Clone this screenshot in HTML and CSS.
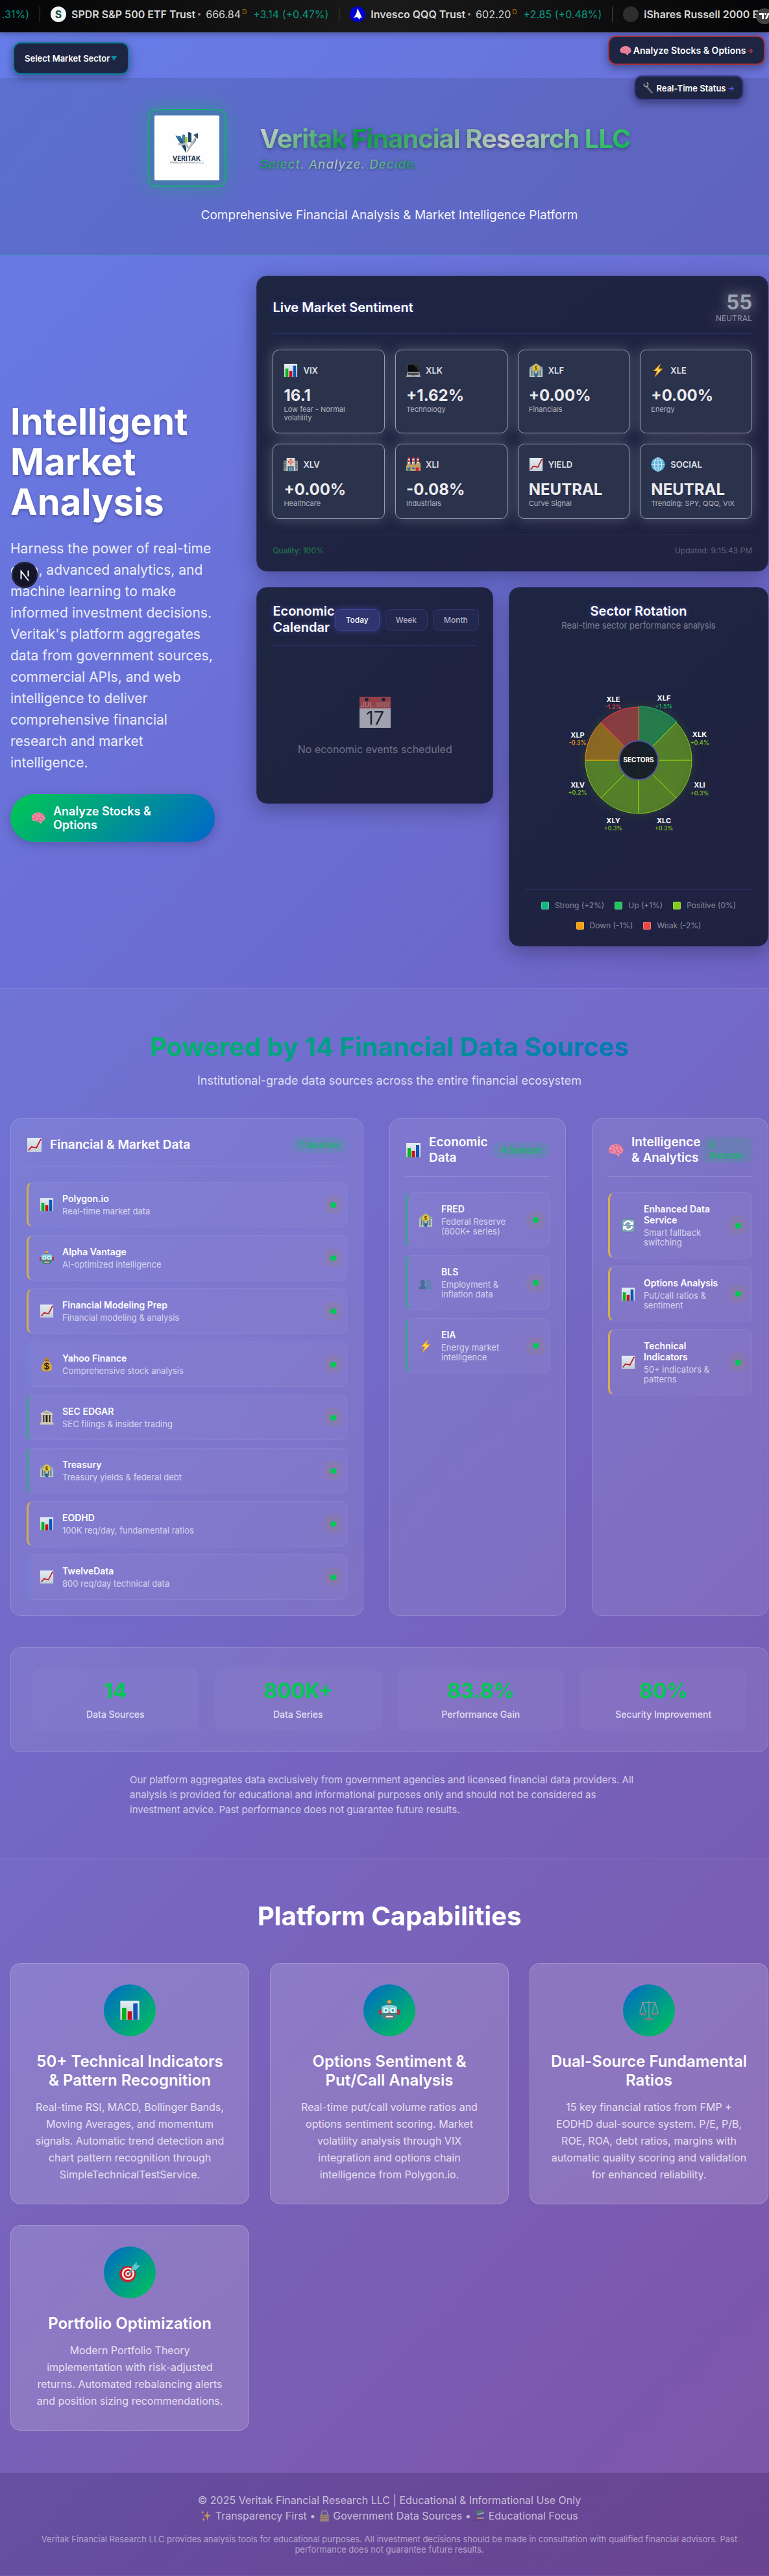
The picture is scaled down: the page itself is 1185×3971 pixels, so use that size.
FILE: index.html
```html
<!DOCTYPE html>
<html lang="en">
<head>
<meta charset="utf-8">
<meta name="viewport" content="width=device-width, initial-scale=1">
<title>Veritak Financial Research LLC</title>
<link rel="stylesheet" href="styles.css">
</head>
<body>
<svg class="sprite" aria-hidden="true">
  <defs>
    <linearGradient id="paper" x1="0" y1="0" x2="0" y2="1"><stop offset="0" stop-color="#e3edf5"/><stop offset="1" stop-color="#c3ccd6"/></linearGradient>
    <linearGradient id="navy" x1="0" y1="0" x2="1" y2="1"><stop offset="0" stop-color="#3f86b8"/><stop offset="1" stop-color="#0f2540"/></linearGradient>
  </defs>
  <symbol id="bars" viewBox="0 0 24 24"><path fill="url(#paper)" d="M1 1h22v22H1z"/><path fill="#07b31c" d="M3 9h5v14H3z"/><path fill="#c4121c" d="M9.500 13h5v10h-5z"/><path fill="#0b56b8" d="M16 4h5v19h-5z"/></symbol>
  <symbol id="trend" viewBox="0 0 24 24"><path fill="url(#paper)" d="M1 1h22v22H1z"/><path fill="none" stroke="#c4121c" stroke-width="1.800" d="M3 20.500l4.500-5.500 7.500 1.500L22 3"/></symbol>
  <symbol id="laptop" viewBox="0 0 24 24"><path fill="#4c4d50" d="M2 1h20v14H2z"/><path fill="#08090b" d="M3 2h18v12H3z"/><path fill="#25272b" d="M12 2h9v12z"/><path fill="#a9abae" d="M2 15h20l2 8H0z"/><path fill="#4b4d50" d="M3.500 16h17l1 3.500h-19z"/><path fill="#7f8184" d="M9 20h6l.5 2h-7z"/></symbol>
  <symbol id="bank" viewBox="0 0 24 24"><path fill="#91a5a8" d="M12 0l11 7v3H1V7z"/><path fill="#b9c6c5" d="M1 10h22v13H1z"/><path fill="#506d73" d="M4 11h2v10H4zm4 0h2v10H8zm6 0h2v10h-2zm4 0h2v10h-2z"/><path fill="#22628f" d="M10 17h4v6h-4z"/><circle cx="12" cy="8" r="5.500" fill="#f0c828"/><path fill="none" stroke="#6d5206" stroke-width="1.200" d="M14 6.500c-1-1.500-4-1-3.800.5.200 1.600 3.800.6 3.800 2.400 0 1.500-3 1.700-4 .2M12 4v8"/></symbol>
  <symbol id="bolt" viewBox="0 0 24 24"><path fill="#f7a51d" d="M17 0L4 13h6L6 24 20 9h-7z"/><path fill="#ffe75c" d="M14.500 4L7 12h5l-2.500 7L17 10.500h-6z"/></symbol>
  <symbol id="hospital" viewBox="0 0 24 24"><path fill="#8b9296" d="M0 6h24v17H0z"/><path fill="#4a5b62" d="M1 8h3v1.500H1zm0 3h3v1.500H1zm0 3h3v1.500H1zm0 3h3v1.500H1zM20 8h3v1.500h-3zm0 3h3v1.500h-3zm0 3h3v1.500h-3zm0 3h3v1.500h-3z"/><path fill="#d9d7d2" d="M5 1h14v22H5z"/><path fill="#e2413e" d="M10.500 3h3v3h3v3h-3v3h-3V9h-3V6h3z"/><path fill="#f4d9d6" d="M11.500 4.500h1v2.500h2.500v1h-2.500v2.500h-1V8H9V7h2.500z"/><path fill="#3d5866" d="M7 15h10v8H7z"/><path fill="#6fa9c6" d="M9 17h2.500v6H9zm3.500 0H15v6h-2.500z"/></symbol>
  <symbol id="factory" viewBox="0 0 24 24"><path fill="#f1e9e4" d="M3 1h3l1 11H2zM10.500 1h3l1 11h-5zM18 1h3l1 11h-5z"/><path fill="#d3262f" d="M3 0h3v2.500H3zm0 5h3.200v2.500H2.800zM10.500 0h3v2.500h-3zm0 5h3.200v2.500h-3.400zM18 0h3v2.500h-3zm0 5h3.200v2.500h-3.400z"/><path fill="#bfa06b" d="M0 23V14l7-6v5l7-5v5l8-5 2 2v13z"/><path fill="#347892" d="M2 17h5v6H2zm8 0h4v3h-4z"/><path fill="#d8212b" d="M16 17h5v6h-5z"/></symbol>
  <symbol id="globe" viewBox="0 0 24 24"><circle cx="12" cy="12" r="11.500" fill="#5fb3d6"/><path fill="none" stroke="#d6f0fa" stroke-width="1.200" d="M12 .5v23M.5 12h23M2.500 6h19M2.500 18h19"/><ellipse cx="12" cy="12" rx="6" ry="11.500" fill="none" stroke="#d6f0fa" stroke-width="1.200"/><circle cx="12" cy="12" r="11.200" fill="none" stroke="#3f93b9" stroke-width=".8"/></symbol>
  <symbol id="calendar" viewBox="0 0 48 48"><path fill="#f5f5f7" d="M0 0h48v48H0z"/><path fill="#e2554f" d="M0 0h48v18H0z"/><circle cx="11" cy="4.500" r="2.800" fill="#1e2340"/><circle cx="37" cy="4.500" r="2.800" fill="#1e2340"/><text x="2" y="16" font-size="10" fill="#f4dede">JUL</text><path stroke="#f0b4b0" d="M27 8v8m3-8v8m3-8v8m3-8v8m3-8v8m3-8v8m3-8v8"/><text x="24" y="43" font-size="29" text-anchor="middle" fill="#24262c">17</text></symbol>
  <symbol id="brain" viewBox="0 0 24 24"><path fill="#f08da5" d="M1 13C0 8 4 4 9 3c6-1 12 1 14 6 1 4 0 7-3 8-1 1-2 1-3 1l1 3-3 .5-2-3.500c-4 .5-5-.5-6-1-3 0-6-1-6-4z"/><path fill="none" stroke="#b9526f" stroke-width="1" d="M4 8c3-1 4 1 3 3m2-7c3 0 4 2 2 4m3-4c3 0 4 3 2 5m3-3c3 0 4 3 2 5M2 13c3-1 5 0 6 2m1-4c3-1 5 1 4 4m2-4c3 0 5 1 5 4m-11 2c3-1 6-2 9 0"/></symbol>
  <symbol id="robot" viewBox="0 0 24 24"><circle cx="12" cy="2.500" r="2.300" fill="#f5a623"/><path fill="#5d4a8a" d="M10.500 4h3v3h-3z"/><path fill="#b9333a" d="M0 11h4v6H0zm20 0h4v6h-4z"/><path fill="#8fd3d6" d="M3 8c3-3 15-3 18 0v11c-2 5-16 5-18 0z"/><path fill="#3f8489" d="M3 15h18v4c-2 5-16 5-18 0z"/><circle cx="8" cy="12" r="3" fill="#dffcff"/><circle cx="16" cy="12" r="3" fill="#dffcff"/><circle cx="8" cy="12" r="1.500" fill="#2f9fc0"/><circle cx="16" cy="12" r="1.500" fill="#2f9fc0"/><path fill="#e2413e" d="M12 13l1.500 3h-3z"/><path fill="#f6eee0" stroke="#723b34" stroke-width=".6" d="M7.500 18h9v2.500h-9z"/></symbol>
  <symbol id="moneybag" viewBox="0 0 24 24"><path fill="#b48830" d="M7 0l3 1.500L12 0l2 1.500L17 0l-2 5H9z"/><path fill="#d3a53f" d="M9 6h6c4 4 6 8 6 12 0 5-3 6-9 6s-9-1-9-6c0-4 2-8 6-12z"/><path fill="#8c5f1e" d="M8.500 5h7v1.800h-7z"/><path fill="none" stroke="#38270a" stroke-width="1.800" d="M15.500 12.500c-1-3-7-2.500-7 0 0 3.500 7 1.500 7 5 0 3-6.500 3-7.500.2M12 9v13"/></symbol>
  <symbol id="hall" viewBox="0 0 24 24"><path fill="#d8d3c0" d="M12 0l10 5v3H2V5z"/><path fill="#a8a18b" d="M12 2l7 3.500H5z"/><path fill="#1b1914" d="M3.500 8h17v12h-17z"/><path fill="#d1cbb5" d="M3 8h3v12H3zm5 0h2.300v12H8zm5.500 0H16v12h-2.500zM18 8h3v12h-3zM1.500 20h21v2h-21zM0 22h24v2H0z"/></symbol>
  <symbol id="busts" viewBox="0 0 24 24"><path fill="#4a6f98" d="M1 22c0-4 1-5 4-6-3-4-2-10 2-10s5 6 2 10c3 1 4 2 4 6z"/><path fill="#5c84ae" d="M11 22c0-4 1-5 4-6-3-4-2-10 2-10s5 6 2 10c3 1 4 2 4 6z"/></symbol>
  <symbol id="refresh" viewBox="0 0 24 24"><rect x=".5" y=".5" width="23" height="23" rx="4" fill="#5b8197"/><rect x="1.500" y="1.500" width="21" height="21" rx="3" fill="#7fa4b8"/><path fill="none" stroke="#fff" stroke-width="2.800" d="M5 10.500c2-6 9-7 12.500-3M19 13.500c-2 6-9 7-12.500 3"/><path fill="#fff" d="M20.500 4v7h-7zM3.500 20v-7h7z"/></symbol>
  <symbol id="scales" viewBox="0 0 24 24"><path fill="none" stroke="#8d9aa0" stroke-width="1" d="M4 3h16M12 1v20M5 3L1.500 15M5 3l3.500 12M19 3l-3.500 12M19 3l3.500 12"/><path fill="#737f83" d="M.5 15h9c-1 4-8 4-9 0zm14 0h9c-1 4-8 4-9 0zM7 21h10v2.500H7z"/></symbol>
  <symbol id="target" viewBox="0 0 24 24"><circle cx="9.500" cy="14" r="9.300" fill="#d01c24"/><circle cx="10" cy="13.500" r="7.200" fill="#f7f0ee"/><circle cx="10" cy="13.500" r="5.200" fill="#d01c24"/><circle cx="10" cy="13.500" r="3.200" fill="#f7f0ee"/><circle cx="10" cy="13.500" r="1.500" fill="#d01c24"/><path stroke="#4ba3a8" stroke-width="1.800" d="M10.500 13L19 5"/><path fill="#62c7cf" d="M15 5l5-5v4h4l-5 5h-4z"/></symbol>
  <symbol id="wrench" viewBox="0 0 24 24"><path fill="none" stroke="#77797c" stroke-width="3.200" d="M7 8l12 14"/><path fill="none" stroke="#a7a9ac" stroke-width="2.200" d="M2 2.500C1 7 5 10 8 8s3-6-.5-7.500"/></symbol>
  <symbol id="sparkles" viewBox="0 0 24 24"><path fill="#d9a850" d="M14 3l2 7 7 2-7 2-2 8-2-8-6-2 6-2zM4 1l1 3 3 1-3 1-1 3-1-3-2-1 2-1zM6 16l1 3 3 1-3 1-1 3-1-3-2-1 2-1z"/></symbol>
  <symbol id="lock" viewBox="0 0 24 24"><path fill="none" stroke="#8f8fa3" stroke-width="2.600" d="M6 12V7c0-7 12-7 12 0v5"/><rect x="3" y="10" width="18" height="14" rx="1.500" fill="#a8906f"/><path stroke="#8a7458" d="M3 14h18M3 18h18"/></symbol>
  <symbol id="books" viewBox="0 0 24 24"><path fill="#4d8262" d="M3 3L17 0l4 5L7 9z"/><path fill="#d5d2cc" d="M7 9l14-4v2L7 11z"/><path fill="#3b5c92" d="M2 10l5 2 15-3v4L7 16l-5-2z"/><path fill="#b3303f" d="M4 15h17v4H4z"/><path fill="#ddd" d="M7 16h14v2H7z"/><path fill="#4a4d86" d="M2 19h18v4H2z"/></symbol>
</svg>

<div class="ticker">
  <div class="tick tick-cut"><span class="up">.31%)</span></div>
  <div class="tick"><span class="coin coin-spdr">S</span><b>SPDR S&amp;P 500 ETF Trust</b><i class="bullet"></i><span class="price">666.84<sup>D</sup></span><span class="up">+3.14 (+0.47%)</span></div>
  <div class="tick"><span class="coin coin-qqq"><svg viewBox="0 0 24 24"><path fill="#fff" d="M12 3l4 8 3 7-3-1-1 3-4-4-5 2 4-7z"/></svg></span><b>Invesco QQQ Trust</b><i class="bullet"></i><span class="price">602.20<sup>D</sup></span><span class="up">+2.85 (+0.48%)</span></div>
  <div class="tick"><span class="coin coin-iwm"></span><b>iShares Russell 2000 ETF</b></div>
  <svg class="tv" viewBox="0 0 26 24" aria-hidden="true"><rect width="26" height="24" rx="12" fill="#434343"/><path fill="#fff" d="M5 7h7v9H9v-6H5zM18 7h3l-4 9h-3z"/><circle cx="14.500" cy="8.500" r="1.600" fill="#fff"/></svg>
</div>

<button class="float float-sector" type="button">Select Market Sector<span class="caret">▼</span></button>
<a class="float float-analyze" href="#"><svg class="ico"><use href="#brain"/></svg>Analyze Stocks &amp; Options<span class="arrow">→</span></a>
<a class="float float-status" href="#"><svg class="ico"><use href="#wrench"/></svg>Real-Time Status<span class="arrow">→</span></a>
<button class="dev" type="button" aria-label="Developer tools"><svg viewBox="0 0 36 36"><path fill="none" stroke="#fff" stroke-width="2" d="M12.500 25V12.500L24 27M23.500 11.500v9"/></svg></button>

<div class="page">
  <header class="masthead">
    <div class="brand">
      <div class="logo">
        <svg viewBox="0 0 100 100" role="img" aria-label="Veritak logo">
          <rect width="100" height="100" rx="2" fill="#fefefe"/>
          <path fill="url(#navy)" d="M32 31l8 1 9 17v9zM43 30l3-1v13h-3zM53 27h4v15l-4-2z"/>
          <path fill="#3f86b8" d="M44 30h3v12h-3z"/><path fill="#1c4468" d="M52 26h3v15h-3z"/><path fill="#a6c82a" d="M47 33h4v9h-4z"/>
          <path fill="#0f2540" d="M40 45l9 13 14-25 1 5-15 20z"/>
          <path fill="none" stroke="#b9bcc0" stroke-width="3" d="M36 44l7 1 5-2 5 8 12-19"/><path fill="#34506b" d="M60 30l7-3v9z"/>
          <text x="49.500" y="70" font-size="10" font-weight="700" text-anchor="middle" fill="#16314f">VERITAK</text>
          <text x="50" y="74" font-size="4" text-anchor="middle" fill="#555">FINANCIAL RESEARCH LLC</text>
        </svg>
      </div>
      <div>
        <h1 class="brand-name">Veritak Financial Research LLC</h1>
        <p class="tagline">Select. Analyze. Decide.</p>
      </div>
    </div>
    <p class="subtitle">Comprehensive Financial Analysis &amp; Market Intelligence Platform</p>
  </header>

  <section class="hero">
    <div class="pitch">
      <h2>Intelligent Market Analysis</h2>
      <p>Harness the power of real-time data, advanced analytics, and machine learning to make informed investment decisions. Veritak's platform aggregates data from government sources, commercial APIs, and web intelligence to deliver comprehensive financial research and market intelligence.</p>
      <a class="cta" href="#"><svg class="ico"><use href="#brain"/></svg><span>Analyze Stocks &amp; Options</span></a>
    </div>

    <div class="board">
      <article class="panel sentiment">
        <header class="panel-head">
          <h3>Live Market Sentiment</h3>
          <div class="score"><strong>55</strong><span>NEUTRAL</span></div>
        </header>
        <div class="cells">
          <div class="cell"><div class="cell-head"><svg class="ico"><use href="#bars"/></svg>VIX</div><strong>16.1</strong><p>Low fear - Normal volatility</p></div>
          <div class="cell"><div class="cell-head"><svg class="ico"><use href="#laptop"/></svg>XLK</div><strong>+1.62%</strong><p>Technology</p></div>
          <div class="cell"><div class="cell-head"><svg class="ico"><use href="#bank"/></svg>XLF</div><strong>+0.00%</strong><p>Financials</p></div>
          <div class="cell"><div class="cell-head"><svg class="ico"><use href="#bolt"/></svg>XLE</div><strong>+0.00%</strong><p>Energy</p></div>
          <div class="cell"><div class="cell-head"><svg class="ico"><use href="#hospital"/></svg>XLV</div><strong>+0.00%</strong><p>Healthcare</p></div>
          <div class="cell"><div class="cell-head"><svg class="ico"><use href="#factory"/></svg>XLI</div><strong>-0.08%</strong><p>Industrials</p></div>
          <div class="cell"><div class="cell-head"><svg class="ico"><use href="#trend"/></svg>YIELD</div><strong>NEUTRAL</strong><p>Curve Signal</p></div>
          <div class="cell"><div class="cell-head"><svg class="ico"><use href="#globe"/></svg>SOCIAL</div><strong>NEUTRAL</strong><p>Trending: SPY, QQQ, VIX</p></div>
        </div>
        <footer class="panel-foot"><span class="quality">Quality: 100%</span><span>Updated: 9:15:43 PM</span></footer>
      </article>

      <article class="panel calendar">
        <header class="panel-head">
          <h3>Economic Calendar</h3>
          <div class="tabs"><button class="tab tab-on" type="button">Today</button><button class="tab" type="button">Week</button><button class="tab" type="button">Month</button></div>
        </header>
        <div class="empty"><svg class="ico"><use href="#calendar"/></svg><p>No economic events scheduled</p></div>
      </article>

      <article class="panel rotation">
        <h3>Sector Rotation</h3>
        <p class="note">Real-time sector performance analysis</p>
        <svg class="wheel" viewBox="0 0 350 350" role="img" aria-label="Sector rotation wheel">
          <g class="wedges">
            <path class="w-up" d="M175 175V92A83 83 0 0 1 234 116Z"/>
            <path class="w-pos" d="M175 175V93A82 82 0 0 1 233 117Z" transform="rotate(45 175 175)"/>
            <path class="w-pos" d="M175 175V93A82 82 0 0 1 233 117Z" transform="rotate(90 175 175)"/>
            <path class="w-pos" d="M175 175V93A82 82 0 0 1 233 117Z" transform="rotate(135 175 175)"/>
            <path class="w-pos" d="M175 175V93A82 82 0 0 1 233 117Z" transform="rotate(180 175 175)"/>
            <path class="w-pos" d="M175 175V93A82 82 0 0 1 233 117Z" transform="rotate(225 175 175)"/>
            <path class="w-down" d="M175 175V93A82 82 0 0 1 233 117Z" transform="rotate(270 175 175)"/>
            <path class="w-weak" d="M175 175V93A82 82 0 0 1 233 117Z" transform="rotate(315 175 175)"/>
          </g>
          <circle class="hub" cx="175" cy="175" r="30"/>
          <text class="hub-name" x="175" y="178">SECTORS</text>
          <text class="w-name" x="214" y="83">XLF</text><text class="w-val t-up" x="214" y="95">+1.5%</text>
          <text class="w-name" x="269" y="139">XLK</text><text class="w-val t-pos" x="269" y="151">+0.4%</text>
          <text class="w-name" x="269" y="217">XLI</text><text class="w-val t-pos" x="269" y="229">+0.3%</text>
          <text class="w-name" x="214" y="272">XLC</text><text class="w-val t-pos" x="214" y="283">+0.3%</text>
          <text class="w-name" x="136" y="272">XLY</text><text class="w-val t-pos" x="136" y="283">+0.3%</text>
          <text class="w-name" x="81" y="217">XLV</text><text class="w-val t-pos" x="81" y="228">+0.2%</text>
          <text class="w-name" x="81" y="140">XLP</text><text class="w-val t-down" x="81" y="151">-0.3%</text>
          <text class="w-name" x="136" y="85">XLE</text><text class="w-val t-weak" x="136" y="96">-1.2%</text>
        </svg>
        <ul class="legend">
          <li><i class="s-strong"></i>Strong (+2%)</li><li><i class="s-up"></i>Up (+1%)</li><li><i class="s-pos"></i>Positive (0%)</li><li><i class="s-down"></i>Down (-1%)</li><li><i class="s-weak"></i>Weak (-2%)</li>
        </ul>
      </article>
    </div>
  </section>

  <section class="sources">
    <h2>Powered by 14 Financial Data Sources</h2>
    <p class="lead">Institutional-grade data sources across the entire financial ecosystem</p>
    <div class="groups">
      <article class="group">
        <header class="group-head"><svg class="ico"><use href="#trend"/></svg><h3>Financial &amp; Market Data</h3><span class="pill">7 Sources</span></header>
        <ul>
          <li class="src gold"><svg class="ico"><use href="#bars"/></svg><div><h4>Polygon.io</h4><p>Real-time market data</p></div><span class="live"></span></li>
          <li class="src gold"><svg class="ico"><use href="#robot"/></svg><div><h4>Alpha Vantage</h4><p>AI-optimized intelligence</p></div><span class="live"></span></li>
          <li class="src gold"><svg class="ico"><use href="#trend"/></svg><div><h4>Financial Modeling Prep</h4><p>Financial modeling &amp; analysis</p></div><span class="live"></span></li>
          <li class="src blue"><svg class="ico"><use href="#moneybag"/></svg><div><h4>Yahoo Finance</h4><p>Comprehensive stock analysis</p></div><span class="live"></span></li>
          <li class="src green"><svg class="ico"><use href="#hall"/></svg><div><h4>SEC EDGAR</h4><p>SEC filings &amp; insider trading</p></div><span class="live"></span></li>
          <li class="src green"><svg class="ico"><use href="#bank"/></svg><div><h4>Treasury</h4><p>Treasury yields &amp; federal debt</p></div><span class="live"></span></li>
          <li class="src gold"><svg class="ico"><use href="#bars"/></svg><div><h4>EODHD</h4><p>100K req/day, fundamental ratios</p></div><span class="live"></span></li>
          <li class="src blue"><svg class="ico"><use href="#trend"/></svg><div><h4>TwelveData</h4><p>800 req/day technical data</p></div><span class="live"></span></li>
        </ul>
      </article>
      <article class="group">
        <header class="group-head"><svg class="ico"><use href="#bars"/></svg><h3>Economic Data</h3><span class="pill">4 Sources</span></header>
        <ul>
          <li class="src green"><svg class="ico"><use href="#bank"/></svg><div><h4>FRED</h4><p>Federal Reserve (800K+ series)</p></div><span class="live"></span></li>
          <li class="src green"><svg class="ico"><use href="#busts"/></svg><div><h4>BLS</h4><p>Employment &amp; inflation data</p></div><span class="live"></span></li>
          <li class="src green"><svg class="ico"><use href="#bolt"/></svg><div><h4>EIA</h4><p>Energy market intelligence</p></div><span class="live"></span></li>
        </ul>
      </article>
      <article class="group">
        <header class="group-head"><svg class="ico"><use href="#brain"/></svg><h3>Intelligence &amp; Analytics</h3><span class="pill pill-wrap">3 Sources</span></header>
        <ul>
          <li class="src gold"><svg class="ico"><use href="#refresh"/></svg><div><h4>Enhanced Data Service</h4><p>Smart fallback switching</p></div><span class="live"></span></li>
          <li class="src gold"><svg class="ico"><use href="#bars"/></svg><div><h4>Options Analysis</h4><p>Put/call ratios &amp; sentiment</p></div><span class="live"></span></li>
          <li class="src gold"><svg class="ico"><use href="#trend"/></svg><div><h4>Technical Indicators</h4><p>50+ indicators &amp; patterns</p></div><span class="live"></span></li>
        </ul>
      </article>
    </div>
    <div class="stats">
      <div class="stat"><strong>14</strong><span>Data Sources</span></div>
      <div class="stat"><strong>800K+</strong><span>Data Series</span></div>
      <div class="stat"><strong>83.8%</strong><span>Performance Gain</span></div>
      <div class="stat"><strong>80%</strong><span>Security Improvement</span></div>
    </div>
    <p class="disclaimer">Our platform aggregates data exclusively from government agencies and licensed financial data providers. All analysis is provided for educational and informational purposes only and should not be considered as investment advice. Past performance does not guarantee future results.</p>
  </section>

  <section class="capabilities">
    <h2>Platform Capabilities</h2>
    <div class="features">
      <article class="feature"><div class="disc"><svg class="ico"><use href="#bars"/></svg></div><h3>50+ Technical Indicators &amp; Pattern Recognition</h3><p>Real-time RSI, MACD, Bollinger Bands, Moving Averages, and momentum signals. Automatic trend detection and chart pattern recognition through SimpleTechnicalTestService.</p></article>
      <article class="feature"><div class="disc"><svg class="ico"><use href="#robot"/></svg></div><h3>Options Sentiment &amp; Put/Call Analysis</h3><p>Real-time put/call volume ratios and options sentiment scoring. Market volatility analysis through VIX integration and options chain intelligence from Polygon.io.</p></article>
      <article class="feature"><div class="disc"><svg class="ico"><use href="#scales"/></svg></div><h3>Dual-Source Fundamental Ratios</h3><p>15 key financial ratios from FMP + EODHD dual-source system. P/E, P/B, ROE, ROA, debt ratios, margins with automatic quality scoring and validation for enhanced reliability.</p></article>
      <article class="feature"><div class="disc"><svg class="ico"><use href="#target"/></svg></div><h3>Portfolio Optimization</h3><p>Modern Portfolio Theory implementation with risk-adjusted returns. Automated rebalancing alerts and position sizing recommendations.</p></article>
    </div>
  </section>

  <footer class="foot">
    <p>© 2025 Veritak Financial Research LLC | Educational &amp; Informational Use Only</p>
    <p><svg class="ico"><use href="#sparkles"/></svg> Transparency First • <svg class="ico"><use href="#lock"/></svg> Government Data Sources • <svg class="ico"><use href="#books"/></svg> Educational Focus</p>
    <p class="fine">Veritak Financial Research LLC provides analysis tools for educational purposes. All investment decisions should be made in consultation with qualified financial advisors. Past performance does not guarantee future results.</p>
  </footer>
</div>
</body>
</html>
```

FILE: styles.css
```css
* { box-sizing: border-box; margin: 0; padding: 0; }
html { overflow-x: hidden; }
body {
  position: relative;
  min-height: 100vh;
  overflow-x: hidden;
  font-family: Inter, "Liberation Sans", sans-serif;
  font-size: 16px;
  line-height: 24px;
  color: #fff;
  background: linear-gradient(135deg, #667eea 0%, #764ba2 100%);
}
ul { list-style: none; }
a { color: inherit; text-decoration: none; }
button { font: inherit; color: inherit; cursor: pointer; }
.sprite { position: absolute; width: 0; height: 0; }
.ico { width: 20px; height: 20px; flex: none; overflow: visible; }

/* the content column runs slightly past the window, under the scrollbar gutter */
.page { width: calc(100% + 15px); }

/* ticker tape */
.ticker {
  position: relative;
  display: flex;
  align-items: flex-start;
  height: 50px;
  padding-top: 10px;
  overflow: hidden;
  white-space: nowrap;
  background: linear-gradient(90deg, #050507, #1a1a1a 50%, #050507);
  border-bottom: 1px solid #333;
  box-shadow: 0 2px 10px rgba(0, 0, 0, .3);
  color: #d6d6d6;
}
.tick { display: flex; align-items: center; flex: none; height: 24px; padding: 0 16px; border-right: 1px solid #434343; }
.tick-cut { width: 62px; padding-left: 0; justify-content: flex-end; }
.tick b { font-weight: 600; }
.coin { display: grid; place-items: center; width: 24px; height: 24px; margin-right: 8px; border-radius: 50%; font-weight: 700; }
.coin-spdr { background: #f4f7f7; color: #16493c; }
.coin-qqq { background: #0000d2; }
.coin-iwm { background: #2e2e2e; }
.bullet { width: 4px; height: 4px; margin: 0 8px 0 4px; border-radius: 50%; background: #8a8a8a; }
.price sup { margin-left: 2px; font-size: 10px; line-height: 10px; vertical-align: 6px; color: #c77700; }
.up { margin-left: 10px; color: #089981; }
.tv { position: absolute; right: -6px; top: 13px; width: 26px; height: 24px; }

/* floating controls */
.float {
  position: absolute;
  z-index: 2;
  display: flex;
  align-items: center;
  gap: 3px;
  font-size: 13px;
  line-height: 20px;
  font-weight: 600;
  border: 2px solid;
  border-radius: 12px;
  background: #1e2542;
  box-shadow: 0 4px 14px rgba(0, 0, 0, .4);
}
.float .ico { width: 18px; height: 18px; }
.float-sector { left: 20px; top: 65px; height: 50px; padding: 0 16px; gap: 1px; border-color: #0e7c9c; }
.caret { font-size: 10px; color: #0e8ba8; }
.arrow { font-size: 11px; }
.float-analyze { right: 6px; top: 55px; height: 45px; padding: 0 16px; font-size: 14px; border-color: #a5333f; }
.float-analyze .arrow { color: #d64545; margin-left: -2px; }
.float-status { right: 39px; top: 116px; height: 39px; padding: 0 12px; border-color: #42429c; }
.float-status .arrow { color: #5b5be0; }
.dev { position: absolute; z-index: 3; left: 19px; top: 867px; width: 38px; height: 38px; border: 1px solid #38384a; border-radius: 50%; background: #14142a; box-shadow: 0 0 0 1px #0b0b14; }
.dev svg { display: block; width: 36px; height: 36px; }

/* masthead */
.masthead { margin-top: 70px; padding: 48px 16px; background: rgba(0, 0, 0, .1); border-bottom: 1px solid rgba(0, 200, 83, .3); text-align: center; }
.brand { display: flex; justify-content: center; align-items: center; gap: 52px; text-align: left; }
.logo { width: 120px; height: 120px; padding: 8px; border: 2px solid rgba(0, 200, 83, .6); border-radius: 12px; background: rgba(46, 139, 139, .4); box-shadow: 0 0 32px rgba(0, 200, 83, .35); }
.logo svg { display: block; width: 100%; height: 100%; }
.brand-name {
  font-size: 40px; line-height: 48px; font-weight: 700; letter-spacing: -1px;
  background: linear-gradient(135deg, #d5d5d5 0%, #009a3e 28%, #c9c9c9 66%, #00b84a 100%);
  -webkit-background-clip: text; background-clip: text; color: transparent;
  filter: drop-shadow(0 2px 3px rgba(0, 0, 0, .35));
}
.tagline {
  width: max-content; margin-top: 4px; font-size: 19px; line-height: 24px; font-style: italic; font-weight: 500; letter-spacing: 1px;
  background: linear-gradient(90deg, #0aa54b, #b9c4cc 48%, #0aa54b);
  -webkit-background-clip: text; background-clip: text; color: transparent;
  filter: drop-shadow(0 1px 2px rgba(0, 0, 0, .4));
}
.subtitle { margin-top: 32px; font-size: 19px; line-height: 24px; color: rgba(255, 255, 255, .95); }

/* hero */
.hero { display: grid; grid-template-columns: minmax(0, 2fr) minmax(0, 5fr); gap: 64px; align-items: center; padding: 32px 16px; }
.pitch h2 { font-size: 56px; line-height: 62px; font-weight: 700; text-shadow: 0 2px 4px rgba(0, 0, 0, .3); }
.pitch p { margin: 24px 0 32px; font-size: 21px; line-height: 33px; color: rgba(255, 255, 255, .9); }
.cta {
  display: flex; align-items: center; gap: 12px; padding: 16px 32px; border-radius: 40px;
  font-size: 18px; line-height: 21px; font-weight: 600;
  background: linear-gradient(135deg, #00c853, #0066cc);
  box-shadow: 0 4px 15px rgba(0, 0, 0, .2);
}
.cta .ico { width: 22px; height: 22px; }
.board { display: grid; grid-template-columns: minmax(0, 1fr) 400px; gap: 24px; align-items: start; padding-bottom: 32px; }
.panel { padding: 24px; border: 1px solid #2d3163; border-radius: 16px; background: linear-gradient(135deg, #1e2642, #1f2140); box-shadow: 0 8px 32px rgba(0, 0, 0, .3); color: #ededf0; }
.panel h3 { font-size: 20px; line-height: 25px; font-weight: 600; color: #fff; text-shadow: 0 0 10px rgba(99, 102, 241, .5); }
.panel-head { display: flex; align-items: center; justify-content: space-between; padding-bottom: 15px; border-bottom: 1px solid #2d3370; }
.sentiment { grid-column: 1 / -1; }
.score { text-align: right; color: #9ca3af; text-shadow: 0 0 20px rgba(220, 220, 230, .7); }
.score strong { display: block; font-size: 31px; line-height: 32px; font-weight: 700; }
.score span { display: block; font-size: 12px; line-height: 17px; font-weight: 500; opacity: .8; }
.cells { display: grid; grid-template-columns: repeat(4, 1fr); gap: 16px; margin: 24px 0; }
.cell { padding: 16px; border: 1px solid #979cab; border-radius: 10px; background: #2b324c; box-shadow: 0 0 20px rgba(156, 163, 175, .4); }
.cell-head { display: flex; align-items: center; gap: 8px; height: 30px; font-size: 13px; font-weight: 600; color: #dfe0e6; }
.cell-head .ico { width: 22px; height: 22px; }
.cell strong { display: block; margin-top: 8px; font-size: 24px; line-height: 31px; font-weight: 700; color: #eaeaee; }
.cell p { font-size: 11px; line-height: 13px; color: #b3b6c2; }
.panel-foot { display: flex; justify-content: space-between; padding-top: 16px; border-top: 1px solid #272c58; font-size: 12px; line-height: 15px; color: #62667c; }
.quality { color: #23804f; }

.tabs { display: flex; gap: 8px; }
.tab { padding: 7px 16px; font-size: 12px; line-height: 17px; font-weight: 500; color: #b0b2c4; border: 1px solid #32356f; border-radius: 8px; background: #23284f; }
.tab-on { color: #fff; border-color: #4245a0; background: #30346f; box-shadow: 0 0 12px rgba(99, 102, 241, .4); }
.empty { margin-top: 24px; padding: 48px 0; text-align: center; color: #71748a; }
.empty .ico { display: block; width: 48px; height: 48px; margin: 6px auto 23px; opacity: .6; }
.empty p { line-height: 21px; }

.rotation { text-align: center; }
.note { font-size: 13px; line-height: 18px; color: #7d8094; }
.wheel { display: block; width: 100%; margin: 24px 0; }
.wheel text { text-anchor: middle; }
.wedges path { fill-opacity: .48; stroke-width: 1; }
.w-up { fill: #22c55e; stroke: #22c55e; }
.w-pos { fill: #84cc16; stroke: #84cc16; }
.w-down { fill: #f59e0b; stroke: #f59e0b; }
.w-weak { fill: #ef4444; stroke: #ef4444; }
.wedges { filter: drop-shadow(0 0 8px rgba(132, 204, 22, .25)); }
.hub { fill: rgba(20, 25, 40, .92); stroke: #56559c; stroke-width: 2; }
.hub-name { font-size: 10px; font-weight: 700; fill: #fff; }
.w-name { font-size: 11px; font-weight: 700; fill: #fff; }
.w-val { font-size: 9px; font-weight: 500; }
.t-up { fill: #22c55e; }
.t-pos { fill: #84cc16; }
.t-down { fill: #f59e0b; }
.t-weak { fill: #ef4444; }
.legend { display: flex; flex-wrap: wrap; justify-content: center; gap: 16px; padding-top: 16px; border-top: 1px solid #2b315f; font-size: 12px; line-height: 15px; color: #8a8c9f; }
.legend li { display: flex; align-items: center; gap: 9px; }
.legend i { width: 12px; height: 12px; border: 1px solid rgba(255, 255, 255, .3); border-radius: 2px; }
.s-strong { background: #10b981; }
.s-up { background: #22c55e; }
.s-pos { background: #84cc16; }
.s-down { background: #f59e0b; }
.s-weak { background: #ef4444; }

/* data sources */
.sources { padding: 64px 16px; border-top: 1px solid rgba(255, 255, 255, .1); background: rgba(255, 255, 255, .04); text-align: center; }
.sources h2 { font-size: 40px; line-height: 52px; font-weight: 700; background: linear-gradient(135deg, #00c853, #0066cc); -webkit-background-clip: text; background-clip: text; color: transparent; }
.lead { margin: 16px 0 48px; font-size: 18px; line-height: 20px; color: rgba(255, 255, 255, .8); }
.groups { display: grid; grid-template-columns: 2fr 1fr 1fr; gap: 40px; text-align: left; }
.group { padding: 24px; border: 1px solid rgba(255, 255, 255, .14); border-radius: 16px; background: rgba(255, 255, 255, .08); }
.group-head { display: flex; align-items: center; min-height: 49px; padding-bottom: 16px; border-bottom: 1px solid rgba(255, 255, 255, .14); }
.group-head .ico { width: 24px; height: 24px; }
.group-head h3 { flex: 1; margin-left: 12px; font-size: 19px; line-height: 24px; font-weight: 600; }
.pill { flex: none; padding: 4px 12px; border-radius: 12px; font-size: 13px; line-height: 16px; font-weight: 600; color: #12b866; background: rgba(0, 200, 83, .14); }
.pill-wrap { width: 78px; }
.group ul { display: grid; gap: 12px; margin-top: 24px; }
.src { display: flex; align-items: center; gap: 12px; padding: 16px 7px 16px 16px; border: 1px solid rgba(255, 255, 255, .06); border-left-width: 3px; border-radius: 10px; background: rgba(255, 255, 255, .03); }
.src div { flex: 1; }
.src > .ico { width: 22px; height: 22px; margin: 0 1px; }
.src h4 { margin-bottom: 4px; font-size: 14px; line-height: 17px; font-weight: 600; }
.src p { font-size: 13px; line-height: 15px; color: rgba(255, 255, 255, .7); }
.src.gold { border-left-color: #d3b04c; }
.src.green { border-left-color: #34a884; }
.src.blue { border-left-color: #6f7ee2; }
.live { display: grid; place-items: center; flex: none; width: 28px; height: 28px; border-radius: 10px; background: rgba(160, 130, 90, .2); }
.live::before { content: ""; width: 9px; height: 9px; border-radius: 50%; background: #00c853; }

.stats { display: grid; grid-template-columns: repeat(4, 1fr); gap: 24px; margin-top: 48px; padding: 32px; border: 1px solid rgba(255, 255, 255, .14); border-radius: 16px; background: rgba(255, 255, 255, .08); }
.stat { padding: 16px; border-radius: 12px; background: rgba(255, 255, 255, .03); }
.stat strong { display: block; margin-bottom: 8px; font-size: 32px; line-height: 38px; font-weight: 700; color: #00c853; }
.stat span { display: block; font-size: 14px; line-height: 18px; font-weight: 500; color: rgba(255, 255, 255, .8); }
.disclaimer { max-width: 800px; margin: 31px auto 0; padding-right: 8px; font-size: 15px; line-height: 23px; text-align: left; color: rgba(255, 255, 255, .7); }

/* capabilities */
.capabilities { padding: 64px 16px; border-top: 1px solid rgba(255, 255, 255, .1); background: rgba(255, 255, 255, .05); text-align: center; }
.capabilities h2 { margin-bottom: 48px; font-size: 40px; line-height: 48px; font-weight: 700; }
.features { display: grid; grid-template-columns: repeat(3, 1fr); gap: 32px; }
.feature { padding: 32px; border: 1px solid rgba(255, 255, 255, .2); border-radius: 16px; background: rgba(255, 255, 255, .15); }
.disc { display: grid; place-items: center; width: 80px; height: 80px; margin: 0 auto 24px; border-radius: 50%; background: linear-gradient(135deg, #0066cc, #00c853); }
.disc .ico { width: 32px; height: 32px; }
.feature h3 { margin-bottom: 14px; font-size: 24px; line-height: 29px; font-weight: 600; }
.feature p { line-height: 26px; color: rgba(255, 255, 255, .8); }

.foot { padding: 32px; border-top: 1px solid rgba(255, 255, 255, .1); background: rgba(0, 0, 0, .1); text-align: center; color: rgba(255, 255, 255, .65); }
.foot p { margin-bottom: 4px; line-height: 20px; }
.foot .ico { width: 18px; height: 18px; vertical-align: -3px; opacity: .8; }
.foot .fine { margin: 18px 0 0; font-size: 13px; line-height: 16px; color: rgba(255, 255, 255, .5); }
```
